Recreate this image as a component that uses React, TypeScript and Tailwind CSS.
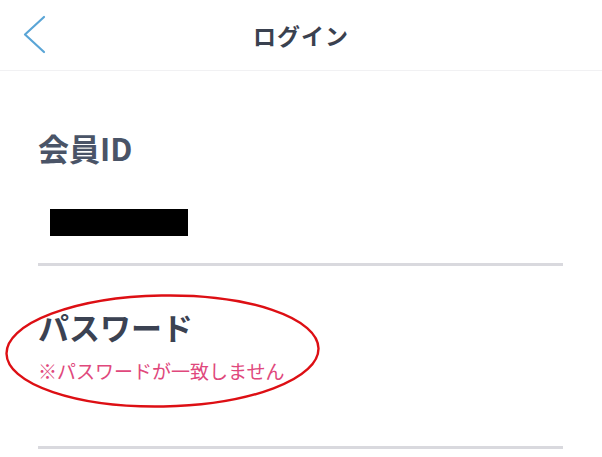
import React from "react";

export default function App() {
  const font = {
    fontFamily: '"Noto Sans CJK JP", "Noto Sans", sans-serif',
  };
  return (
    <div
      className="relative w-[602px] h-[457px] bg-white overflow-hidden"
      style={font}
    >
      <header className="relative h-[71px] border-b border-[#f1f1f3] flex items-center justify-center">
        <svg
          className="absolute left-[22px] top-[15px]"
          width="26"
          height="40"
          viewBox="0 0 26 40"
          fill="none"
        >
          <path
            d="M22 2 L3 19.5 L22 37"
            stroke="#5aa5d6"
            strokeWidth="2.2"
            strokeLinecap="round"
            strokeLinejoin="round"
          />
        </svg>
        <h1 className="text-[23px] font-bold leading-none text-[#3a414f] tracking-[1px]">
          ログイン
        </h1>
      </header>

      <main className="pl-[38px] pr-[39px]">
        <div className="pt-[61px] text-[31px] font-bold leading-none text-[#4a5467]">
          会員ID
        </div>
        <div className="mt-[46px] ml-[12px] w-[138px] h-[27px] bg-black" />
        <div className="mt-[27px] h-[3px] bg-[#d9d9de]" />

        <div className="mt-[45px] text-[31px] font-bold leading-none text-[#3b4252]">
          パスワード
        </div>
        <div className="mt-[19px] text-[19px] leading-none text-[#e0487c]">
          ※パスワードが一致しません
        </div>
        <div className="mt-[66px] h-[3px] bg-[#d9d9de]" />
      </main>

      <svg
        className="absolute left-0 top-[290px] pointer-events-none"
        width="330"
        height="125"
        viewBox="0 0 330 125"
        fill="none"
      >
        <ellipse
          cx="162.5"
          cy="61"
          rx="156"
          ry="55.5"
          stroke="#dd0f14"
          strokeWidth="2.4"
          transform="rotate(-1 162.5 61)"
        />
      </svg>
    </div>
  );
}
